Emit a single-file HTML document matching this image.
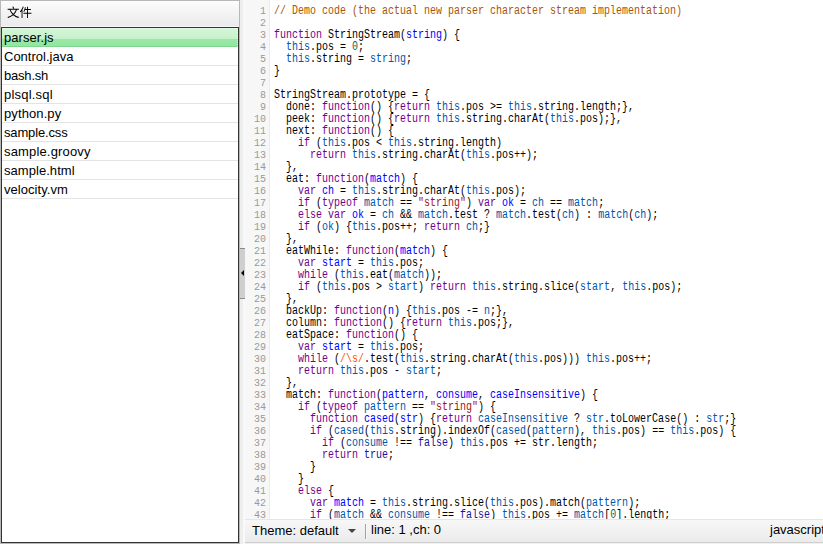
<!DOCTYPE html>
<html>
<head>
<meta charset="utf-8">
<title>CodeMirror</title>
<style>
html,body{margin:0;padding:0;overflow:hidden;}
body{width:823px;height:544px;overflow:hidden;background:#fff;position:relative;font-family:"Liberation Sans",sans-serif;font-size:13px;color:#000;}
#left{position:absolute;left:0;top:0;width:238px;height:542px;border:1px solid #b8b8b8;}
#hdr{position:absolute;left:1px;top:1px;width:238px;height:25px;border-bottom:1px solid #f8f8f8;background:linear-gradient(#fcfcfc,#eaeaea);}
#hdr svg{position:absolute;left:6px;top:4.8px;}
#list{position:absolute;left:1px;top:27px;width:236px;height:514px;border:1px solid #333;background:#fff;}
.row{height:18px;line-height:20px;border-bottom:1px solid #e4e4e4;padding-left:2px;white-space:nowrap;overflow:hidden;}
.row.sel{background:linear-gradient(#e2fae5 0,#e2fae5 1px,#d2f6d6 1px,#c6f1ca 11px,#98e9a5 11px,#92e6a0 100%);border-bottom-color:#7fd68e;border-right:1px dotted rgba(255,255,255,.65);}
#split{position:absolute;left:240px;top:0;width:5px;height:544px;background:linear-gradient(to right,#eee 0,#eee 3.5px,#f9f9f9 3.5px,#f9f9f9 5px);}
#split .h{position:absolute;left:0;top:248px;width:5px;height:49px;background:#cfcfcf;border-top:1px solid #8c8c8c;border-bottom:1px solid #8c8c8c;}
#split .a{position:absolute;left:1px;top:270px;width:0;height:0;border-top:3px solid transparent;border-bottom:3px solid transparent;border-right:3px solid #000;}
#gutter{position:absolute;left:245px;top:0;width:24px;height:519px;overflow:hidden;background:#f7f7f7;border-right:1px solid #ebebeb;}
#gutter pre{margin:0;padding:5px 0 0 0;width:24px;position:absolute;right:3px;top:0;text-align:right;color:#999;font-size:11px;transform:scaleX(.90909);transform-origin:100% 0;}
#code{position:absolute;left:274px;top:5px;margin:0;transform:scaleX(.83333);transform-origin:0 0;}
pre{font-family:"Liberation Mono",monospace;font-size:12px;line-height:12px;}
pre i{font-style:normal;}
.k{color:#708}.d{color:#00f}.v{color:#05a}.s{color:#a11}.r{color:#f50}.n{color:#164}.a{color:#219}.c{color:#a50}
#status{position:absolute;left:245px;top:519px;width:578px;height:24px;background:linear-gradient(#f7f7f7,#ebebeb);border-top:1px solid #e6e6e6;border-bottom:1px solid #cfcfcf;box-sizing:border-box;}
#status span{position:absolute;top:3px;white-space:nowrap;}
#status .dd{position:absolute;left:102.5px;top:9px;width:0;height:0;border-left:4px solid transparent;border-right:4px solid transparent;border-top:4.5px solid #444;}
#status .sep{position:absolute;left:120px;top:4px;width:1px;height:15px;background:#a0a0a0;border-right:1px solid #fafafa;}
#foot{position:absolute;left:245px;top:543px;width:578px;height:1px;background:#f0f0f0;}
</style>
</head>
<body>
<div id="left"></div>
<div id="hdr"><svg width="25" height="12.5" viewBox="0 0 2000 1000"><path d="M423 57C453 106 485 173 497 214L580 187C566 146 531 81 501 33ZM50 216V290H206C265 442 344 573 447 680C337 772 202 840 36 887C51 905 75 940 83 958C250 904 389 832 502 734C615 834 751 908 915 953C928 932 950 900 967 884C807 844 671 773 560 679C661 576 738 448 796 290H954V216ZM504 627C410 532 336 418 284 290H711C661 425 592 536 504 627Z"/><path transform="translate(1000,0)" d="M317 539V612H604V960H679V612H953V539H679V318H909V245H679V52H604V245H470C483 200 494 152 504 105L432 90C409 221 367 350 309 433C327 442 359 460 373 471C400 429 425 376 446 318H604V539ZM268 44C214 195 126 345 32 443C45 460 67 499 75 517C107 483 137 443 167 400V958H239V283C277 213 311 139 339 65Z"/></svg></div>
<div id="list">
<div class="row sel" style="letter-spacing:0.06px">parser.js</div>
<div class="row">Control.java</div>
<div class="row" style="letter-spacing:-0.2px">bash.sh</div>
<div class="row" style="letter-spacing:0.2px">plsql.sql</div>
<div class="row" style="letter-spacing:0.1px">python.py</div>
<div class="row" style="letter-spacing:-0.15px">sample.css</div>
<div class="row" style="letter-spacing:0.16px">sample.groovy</div>
<div class="row" style="letter-spacing:0.05px">sample.html</div>
<div class="row" style="letter-spacing:0.05px">velocity.vm</div>
</div>
<div id="split"><div class="h"></div><div class="a"></div></div>
<div id="gutter"><pre>1
2
3
4
5
6
7
8
9
10
11
12
13
14
15
16
17
18
19
20
21
22
23
24
25
26
27
28
29
30
31
32
33
34
35
36
37
38
39
40
41
42
43</pre></div>
<pre id="code"><i class="c">// Demo code (the actual new parser character stream implementation)</i>

<i class="k">function</i> StringStream(<i class="d">string</i>) {
  <i class="v">this</i>.pos = <i class="n">0</i>;
  <i class="v">this</i>.string = <i class="v">string</i>;
}

StringStream.prototype = {
  done: <i class="k">function</i>() {<i class="k">return</i> <i class="v">this</i>.pos &gt;= <i class="v">this</i>.string.length;},
  peek: <i class="k">function</i>() {<i class="k">return</i> <i class="v">this</i>.string.charAt(<i class="v">this</i>.pos);},
  next: <i class="k">function</i>() {
    <i class="k">if</i> (<i class="v">this</i>.pos &lt; <i class="v">this</i>.string.length)
      <i class="k">return</i> <i class="v">this</i>.string.charAt(<i class="v">this</i>.pos++);
  },
  eat: <i class="k">function</i>(<i class="d">match</i>) {
    <i class="k">var</i> <i class="d">ch</i> = <i class="v">this</i>.string.charAt(<i class="v">this</i>.pos);
    <i class="k">if</i> (<i class="k">typeof</i> <i class="v">match</i> == <i class="s">"string"</i>) <i class="k">var</i> <i class="d">ok</i> = <i class="v">ch</i> == <i class="v">match</i>;
    <i class="k">else</i> <i class="k">var</i> <i class="d">ok</i> = <i class="v">ch</i> &amp;&amp; <i class="v">match</i>.test ? <i class="v">match</i>.test(<i class="v">ch</i>) : <i class="v">match</i>(<i class="v">ch</i>);
    <i class="k">if</i> (<i class="v">ok</i>) {<i class="v">this</i>.pos++; <i class="k">return</i> <i class="v">ch</i>;}
  },
  eatWhile: <i class="k">function</i>(<i class="d">match</i>) {
    <i class="k">var</i> <i class="d">start</i> = <i class="v">this</i>.pos;
    <i class="k">while</i> (<i class="v">this</i>.eat(<i class="v">match</i>));
    <i class="k">if</i> (<i class="v">this</i>.pos &gt; <i class="v">start</i>) <i class="k">return</i> <i class="v">this</i>.string.slice(<i class="v">start</i>, <i class="v">this</i>.pos);
  },
  backUp: <i class="k">function</i>(<i class="d">n</i>) {<i class="v">this</i>.pos -= <i class="v">n</i>;},
  column: <i class="k">function</i>() {<i class="k">return</i> <i class="v">this</i>.pos;},
  eatSpace: <i class="k">function</i>() {
    <i class="k">var</i> <i class="d">start</i> = <i class="v">this</i>.pos;
    <i class="k">while</i> (<i class="r">/\s/</i>.test(<i class="v">this</i>.string.charAt(<i class="v">this</i>.pos))) <i class="v">this</i>.pos++;
    <i class="k">return</i> <i class="v">this</i>.pos - <i class="v">start</i>;
  },
  match: <i class="k">function</i>(<i class="d">pattern</i>, <i class="d">consume</i>, <i class="d">caseInsensitive</i>) {
    <i class="k">if</i> (<i class="k">typeof</i> <i class="v">pattern</i> == <i class="s">"string"</i>) {
      <i class="k">function</i> <i class="d">cased</i>(<i class="d">str</i>) {<i class="k">return</i> <i class="v">caseInsensitive</i> ? <i class="v">str</i>.toLowerCase() : <i class="v">str</i>;}
      <i class="k">if</i> (<i class="v">cased</i>(<i class="v">this</i>.string).indexOf(<i class="v">cased</i>(<i class="v">pattern</i>), <i class="v">this</i>.pos) == <i class="v">this</i>.pos) {
        <i class="k">if</i> (<i class="v">consume</i> !== <i class="a">false</i>) <i class="v">this</i>.pos += str.length;
        <i class="k">return</i> <i class="a">true</i>;
      }
    }
    <i class="k">else</i> {
      <i class="k">var</i> <i class="d">match</i> = <i class="v">this</i>.string.slice(<i class="v">this</i>.pos).match(<i class="v">pattern</i>);
      <i class="k">if</i> (<i class="v">match</i> &amp;&amp; <i class="v">consume</i> !== <i class="a">false</i>) <i class="v">this</i>.pos += <i class="v">match</i>[<i class="n">0</i>].length;</pre>
<div id="status"><span style="left:7px">Theme: default</span><div class="dd"></div><div class="sep"></div><span style="left:126px;top:2px">line: 1 ,ch: 0</span><span style="left:525px;top:2px">javascript</span></div>
<div id="foot"></div>
</body>
</html>
